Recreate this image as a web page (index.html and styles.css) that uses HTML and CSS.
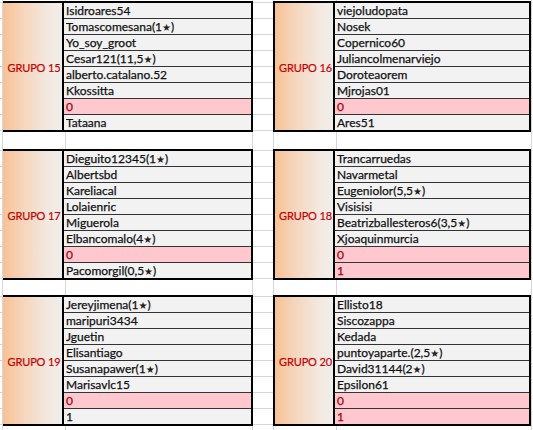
FILE: index.html
```html
<!DOCTYPE html>
<html>
<head>
<meta charset="utf-8">
<link rel="stylesheet" href="styles.css">
</head>
<body>
<div class="sheet">
  <div class="band band-1">
    <div class="strip"></div>
    <div class="group group-left">
      <div class="label">GRUPO 15</div>
      <div class="names">
        <div class="cell">Isidroares54</div>
        <div class="cell">Tomascomesana(1<span class="star">★</span>)</div>
        <div class="cell">Yo_soy_groot</div>
        <div class="cell">Cesar121(11,5<span class="star">★</span>)</div>
        <div class="cell">alberto.catalano.52</div>
        <div class="cell">Kkossitta</div>
        <div class="cell bad">0</div>
        <div class="cell">Tataana</div>
      </div>
    </div>
    <div class="gapcol"></div>
    <div class="group group-right">
      <div class="label">GRUPO 16</div>
      <div class="names">
        <div class="cell">viejoludopata</div>
        <div class="cell">Nosek</div>
        <div class="cell">Copernico60</div>
        <div class="cell">Juliancolmenarviejo</div>
        <div class="cell">Doroteaorem</div>
        <div class="cell">Mjrojas01</div>
        <div class="cell bad">0</div>
        <div class="cell">Ares51</div>
      </div>
    </div>
  </div>

  <div class="band band-2">
    <div class="strip"></div>
    <div class="group group-left">
      <div class="label">GRUPO 17</div>
      <div class="names">
        <div class="cell">Dieguito12345(1<span class="star">★</span>)</div>
        <div class="cell">Albertsbd</div>
        <div class="cell">Kareliacal</div>
        <div class="cell">Lolaienric</div>
        <div class="cell">Miguerola</div>
        <div class="cell">Elbancomalo(4<span class="star">★</span>)</div>
        <div class="cell bad">0</div>
        <div class="cell">Pacomorgil(0,5<span class="star">★</span>)</div>
      </div>
    </div>
    <div class="gapcol"></div>
    <div class="group group-right">
      <div class="label">GRUPO 18</div>
      <div class="names">
        <div class="cell">Trancarruedas</div>
        <div class="cell">Navarmetal</div>
        <div class="cell">Eugeniolor(5,5<span class="star">★</span>)</div>
        <div class="cell">Visisisi</div>
        <div class="cell">Beatrizballesteros6(3,5<span class="star">★</span>)</div>
        <div class="cell">Xjoaquinmurcia</div>
        <div class="cell bad">0</div>
        <div class="cell bad">1</div>
      </div>
    </div>
  </div>

  <div class="band band-3">
    <div class="strip"></div>
    <div class="group group-left">
      <div class="label">GRUPO 19</div>
      <div class="names">
        <div class="cell">Jereyjimena(1<span class="star">★</span>)</div>
        <div class="cell">maripuri3434</div>
        <div class="cell">Jguetin</div>
        <div class="cell">Elisantiago</div>
        <div class="cell">Susanapawer(1<span class="star">★</span>)</div>
        <div class="cell">Marisavlc15</div>
        <div class="cell bad">0</div>
        <div class="cell">1</div>
      </div>
    </div>
    <div class="gapcol"></div>
    <div class="group group-right">
      <div class="label">GRUPO 20</div>
      <div class="names">
        <div class="cell">Ellisto18</div>
        <div class="cell">Siscozappa</div>
        <div class="cell">Kedada</div>
        <div class="cell">puntoyaparte.(2,5<span class="star">★</span>)</div>
        <div class="cell">David31144(2<span class="star">★</span>)</div>
        <div class="cell">Epsilon61</div>
        <div class="cell bad">0</div>
        <div class="cell bad">1</div>
      </div>
    </div>
  </div>
</div>
</body>
</html>
```

FILE: styles.css
```css
html, body {
  margin: 0;
  padding: 0;
}
body {
  width: 533px;
  height: 430px;
  overflow: hidden;
  background-color: #fff;
  background-image: linear-gradient(to right,
    transparent 2px, #d6d6d6 2px 3px,
    transparent 3px 65px, #d6d6d6 65px 66px,
    transparent 66px 252px, #d6d6d6 252px 253px,
    transparent 253px 273px, #d6d6d6 273px 274px,
    transparent 274px 336px, #d6d6d6 336px 337px,
    transparent 337px 531px, #d6d6d6 531px 532px,
    transparent 532px);
  font-family: "Lato", "DejaVu Sans", sans-serif;
}
.sheet {
  display: flex;
  flex-direction: column;
  padding-top: 1px;
}
.band {
  display: flex;
  height: 131px;
}
.band-2 { margin-top: 17px; }
.band-3 { margin-top: 15px; }

.strip {
  width: 3px;
  flex: none;
  background: repeating-linear-gradient(to bottom, transparent 0 1px, #d6d6d6 1px 2px, transparent 2px 16px);
}
.gapcol {
  width: 20px;
  flex: none;
  background: repeating-linear-gradient(to bottom, transparent 0 1px, #d6d6d6 1px 2px, transparent 2px 16px);
}
.group {
  display: flex;
  flex: none;
  box-sizing: border-box;
  border: 2px solid #000;
  height: 131px;
}
.group-left {
  width: 250px;
  border-left: none;
}
.group-right {
  width: 258px;
}
.label {
  flex: none;
  display: flex;
  align-items: center;
  justify-content: center;
  border-right: 2px solid #000;
  background: linear-gradient(to right, #f8c195 0%, #f5d6bd 35%, #f3e8df 75%, #f1eeeb 100%);
  color: #c80000;
  font-size: 11px;
  letter-spacing: -0.15px;
  -webkit-text-stroke: 0.2px #c80000;
  padding-left: 3px;
  padding-top: 1px;
  box-sizing: border-box;
  white-space: nowrap;
}
.group-left .label { width: 61px; }
.group-right .label { width: 60px; }
.names {
  flex: 1;
  display: flex;
  flex-direction: column;
}
.cell {
  height: 15px;
  line-height: 15px;
  padding-left: 2px;
  background: #f2f2f2;
  color: #111;
  -webkit-text-stroke: 0.25px #111;
  font-size: 12px;
  white-space: nowrap;
  overflow: hidden;
}
.cell + .cell {
  border-top: 1px solid #333;
}
.cell.bad {
  background: #ffc7ce;
  color: #a8000c;
  -webkit-text-stroke: 0.25px #a8000c;
}
.star {
  font-family: "DejaVu Sans", sans-serif;
  font-size: 10px;
  color: #222;
  -webkit-text-stroke: 0;
}
```
